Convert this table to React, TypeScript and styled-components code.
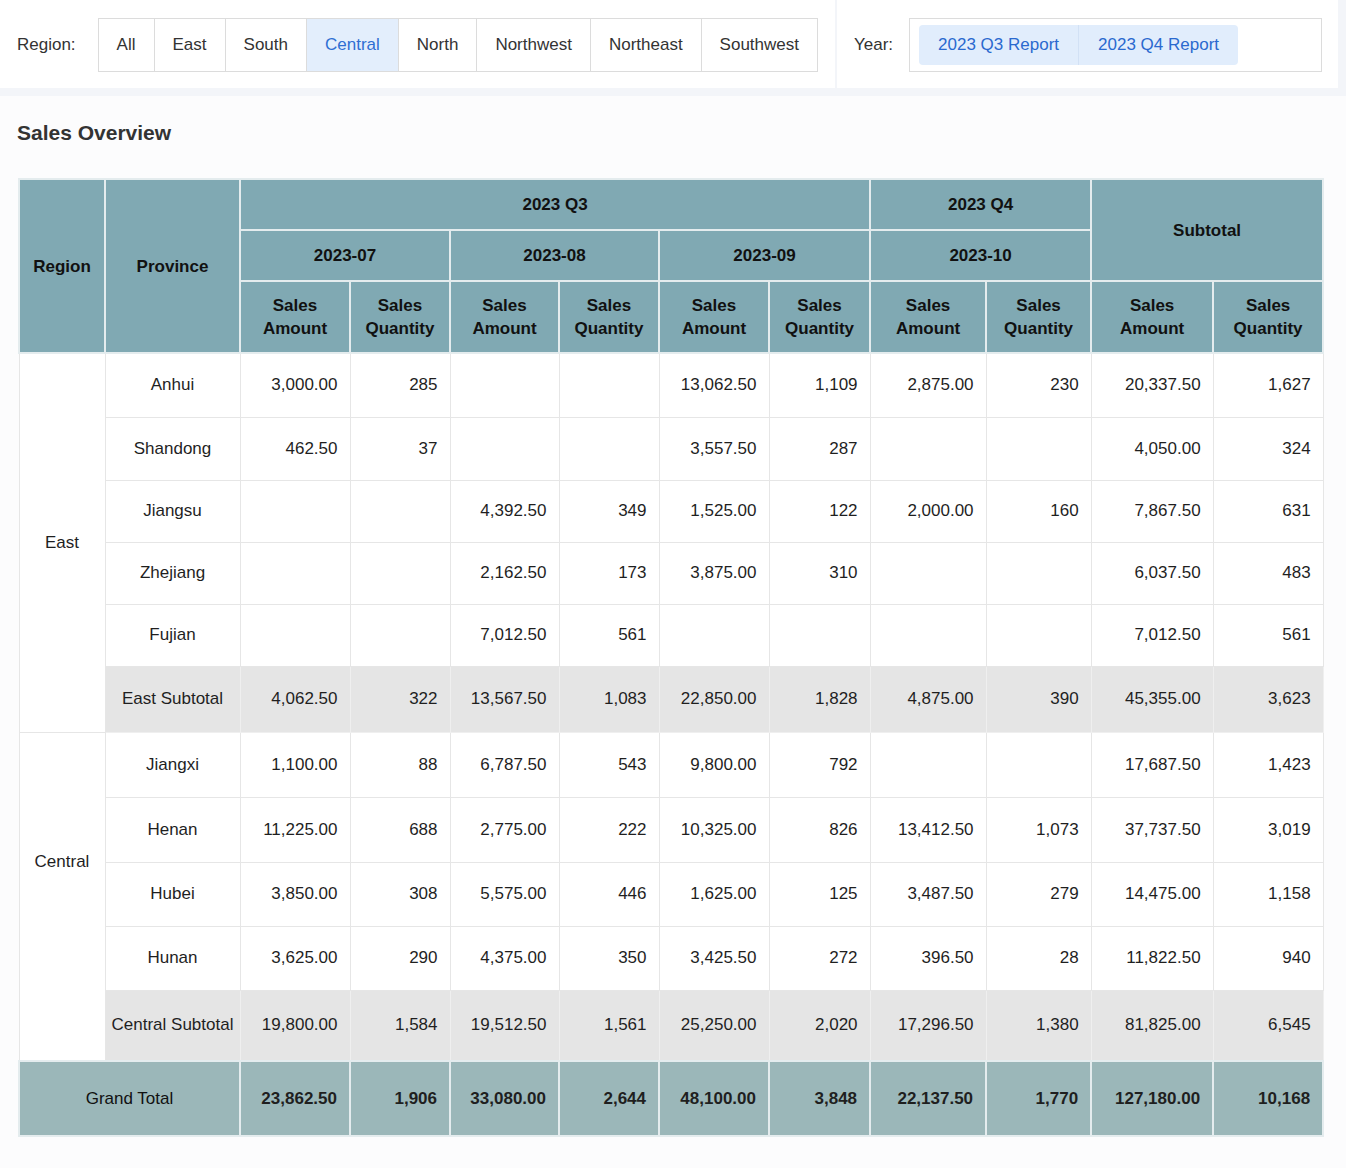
import React, { useState } from "react";
import styled, { createGlobalStyle, css } from "styled-components";

const GlobalStyle = createGlobalStyle`
  html, body {
    margin: 0;
    padding: 0;
    background: #fcfcfd;
    font-family: "Liberation Sans", Helvetica, Arial, sans-serif;
    color: #222;
  }
`;

const Page = styled.div`
  min-height: 1168px;
  background: #fcfcfd;
`;

const TopBar = styled.div`
  display: flex;
  gap: 2px;
  padding: 0 8px 8px 0;
  background: #f3f5f9;
`;

const FilterCard = styled.div<{ $grow?: boolean; $gap: number }>`
  display: flex;
  align-items: center;
  gap: ${({ $gap }) => $gap}px;
  height: 88px;
  box-sizing: border-box;
  padding: 1px 16px 0 17px;
  background: #fff;
  flex: ${({ $grow }) => ($grow ? "1" : "0 0 auto")};
`;

const FilterLabel = styled.span`
  font-size: 17px;
  color: #333;
`;

const SegmentGroup = styled.div`
  display: flex;
  height: 54px;
  box-sizing: border-box;
  border: 1px solid #dcdcdc;
`;

const Segment = styled.button<{ $active?: boolean }>`
  font-family: inherit;
  font-size: 17px;
  padding: 0 18px;
  border: none;
  border-right: 1px solid #dcdcdc;
  background: ${({ $active }) => ($active ? "#e3eefc" : "#fff")};
  color: ${({ $active }) => ($active ? "#2f6fd3" : "#333")};
  cursor: pointer;
  &:last-child {
    border-right: none;
  }
`;

const ReportBox = styled.div`
  flex: 1;
  display: flex;
  align-items: center;
  height: 54px;
  box-sizing: border-box;
  padding: 0 9px;
  border: 1px solid #dcdcdc;
`;

const ReportButton = styled.button`
  font-family: inherit;
  font-size: 17px;
  height: 40px;
  padding: 0 19px;
  border: none;
  background: #e1edfc;
  color: #2a69cf;
  cursor: pointer;
  &:first-child {
    border-radius: 4px 0 0 4px;
    border-right: 1px solid #d2e1f5;
  }
  &:last-child {
    border-radius: 0 4px 4px 0;
  }
`;

const Main = styled.div`
  padding: 25px 24px 30px 18px;
`;

const Title = styled.h2`
  margin: 0 0 33px -1px;
  font-size: 21px;
  font-weight: bold;
  color: #333;
`;

const Table = styled.table`
  width: 1304px;
  table-layout: fixed;
  border-collapse: collapse;
  font-size: 17px;
  color: #1f1f1f;
`;

const HeadCell = styled.th`
  background: #80a9b3;
  color: #111;
  font-weight: bold;
  border: 2px solid #e4ecee;
  text-align: center;
  padding: 0 8px;
  line-height: 23px;
`;

const Row = styled.tr<{ $h: number }>`
  height: ${({ $h }) => $h}px;
`;

type Kind = "data" | "sub" | "total";

const Cell = styled.td<{ $kind?: Kind; $align?: "center" | "right" }>`
  border: 1px solid #e6e6e6;
  padding: ${({ $align }) => ($align === "center" ? "0 4px" : "0 12px")};
  text-align: ${({ $align }) => $align || "right"};
  background: #fff;
  white-space: nowrap;
  ${({ $kind }) =>
    $kind === "sub" &&
    css`
      background: #e5e5e5;
      border-color: #efefef;
    `}
  ${({ $kind }) =>
    $kind === "total" &&
    css`
      background: #9bb7b9;
      border: 2px solid #e4ecee;
      font-weight: bold;
    `}
`;

const RegionCell = styled.td<{ $lift: number }>`
  border: 1px solid #e6e6e6;
  background: #fff;
  text-align: center;
  vertical-align: middle;
  padding: 0 8px ${({ $lift }) => $lift}px;
`;

const GrandLabel = styled.span`
  font-weight: normal;
  color: #111;
`;

type Pair = [string, string];
type Line = { name: string; values: Pair[]; h: number; sub?: boolean };
type Group = { region: string; lift: number; lines: Line[] };

const E: Pair = ["", ""];

const groups: Group[] = [
  {
    region: "East",
    lift: 0,
    lines: [
      { name: "Anhui", h: 64, values: [["3,000.00", "285"], E, ["13,062.50", "1,109"], ["2,875.00", "230"], ["20,337.50", "1,627"]] },
      { name: "Shandong", h: 63, values: [["462.50", "37"], E, ["3,557.50", "287"], E, ["4,050.00", "324"]] },
      { name: "Jiangsu", h: 62, values: [E, ["4,392.50", "349"], ["1,525.00", "122"], ["2,000.00", "160"], ["7,867.50", "631"]] },
      { name: "Zhejiang", h: 62, values: [E, ["2,162.50", "173"], ["3,875.00", "310"], E, ["6,037.50", "483"]] },
      { name: "Fujian", h: 62, values: [E, ["7,012.50", "561"], E, E, ["7,012.50", "561"]] },
      { name: "East Subtotal", h: 66, sub: true, values: [["4,062.50", "322"], ["13,567.50", "1,083"], ["22,850.00", "1,828"], ["4,875.00", "390"], ["45,355.00", "3,623"]] },
    ],
  },
  {
    region: "Central",
    lift: 68,
    lines: [
      { name: "Jiangxi", h: 65, values: [["1,100.00", "88"], ["6,787.50", "543"], ["9,800.00", "792"], E, ["17,687.50", "1,423"]] },
      { name: "Henan", h: 65, values: [["11,225.00", "688"], ["2,775.00", "222"], ["10,325.00", "826"], ["13,412.50", "1,073"], ["37,737.50", "3,019"]] },
      { name: "Hubei", h: 64, values: [["3,850.00", "308"], ["5,575.00", "446"], ["1,625.00", "125"], ["3,487.50", "279"], ["14,475.00", "1,158"]] },
      { name: "Hunan", h: 64, values: [["3,625.00", "290"], ["4,375.00", "350"], ["3,425.50", "272"], ["396.50", "28"], ["11,822.50", "940"]] },
      { name: "Central Subtotal", h: 71, sub: true, values: [["19,800.00", "1,584"], ["19,512.50", "1,561"], ["25,250.00", "2,020"], ["17,296.50", "1,380"], ["81,825.00", "6,545"]] },
    ],
  },
];

const grandTotal: Pair[] = [
  ["23,862.50", "1,906"],
  ["33,080.00", "2,644"],
  ["48,100.00", "3,848"],
  ["22,137.50", "1,770"],
  ["127,180.00", "10,168"],
];

const colWidths = [86, 135, 110, 100, 109, 100, 110, 101, 116, 105, 122, 110];
const regions = ["All", "East", "South", "Central", "North", "Northwest", "Northeast", "Southwest"];

export default function App() {
  const [region, setRegion] = useState("Central");

  return (
    <Page>
      <GlobalStyle />
      <TopBar>
        <FilterCard $gap={22} style={{ width: 835 }}>
          <FilterLabel>Region:</FilterLabel>
          <SegmentGroup>
            {regions.map((r) => (
              <Segment key={r} $active={r === region} onClick={() => setRegion(r)}>
                {r}
              </Segment>
            ))}
          </SegmentGroup>
        </FilterCard>
        <FilterCard $gap={16} $grow>
          <FilterLabel>Year:</FilterLabel>
          <ReportBox>
            <ReportButton>2023 Q3 Report</ReportButton>
            <ReportButton>2023 Q4 Report</ReportButton>
          </ReportBox>
        </FilterCard>
      </TopBar>

      <Main>
        <Title>Sales Overview</Title>
        <Table>
          <colgroup>
            {colWidths.map((w, i) => (
              <col key={i} style={{ width: w }} />
            ))}
          </colgroup>
          <thead>
            <Row $h={51}>
              <HeadCell rowSpan={3}>Region</HeadCell>
              <HeadCell rowSpan={3}>Province</HeadCell>
              <HeadCell colSpan={6}>2023 Q3</HeadCell>
              <HeadCell colSpan={2}>2023 Q4</HeadCell>
              <HeadCell colSpan={2} rowSpan={2}>Subtotal</HeadCell>
            </Row>
            <Row $h={51}>
              <HeadCell colSpan={2}>2023-07</HeadCell>
              <HeadCell colSpan={2}>2023-08</HeadCell>
              <HeadCell colSpan={2}>2023-09</HeadCell>
              <HeadCell colSpan={2}>2023-10</HeadCell>
            </Row>
            <Row $h={72}>
              {Array.from({ length: 5 }).flatMap((_, i) => [
                <HeadCell key={`a${i}`}>Sales<br />Amount</HeadCell>,
                <HeadCell key={`q${i}`}>Sales<br />Quantity</HeadCell>,
              ])}
            </Row>
          </thead>
          <tbody>
            {groups.map((g) =>
              g.lines.map((line, li) => {
                const kind: Kind = line.sub ? "sub" : "data";
                return (
                  <Row key={line.name} $h={line.h}>
                    {li === 0 && (
                      <RegionCell rowSpan={g.lines.length} $lift={g.lift}>
                        {g.region}
                      </RegionCell>
                    )}
                    <Cell $kind={kind} $align="center">{line.name}</Cell>
                    {line.values.flatMap(([amount, qty], i) => [
                      <Cell key={`a${i}`} $kind={kind}>{amount}</Cell>,
                      <Cell key={`q${i}`} $kind={kind}>{qty}</Cell>,
                    ])}
                  </Row>
                );
              })
            )}
            <Row $h={75}>
              <Cell $kind="total" $align="center" colSpan={2}>
                <GrandLabel>Grand Total</GrandLabel>
              </Cell>
              {grandTotal.flatMap(([amount, qty], i) => [
                <Cell key={`a${i}`} $kind="total">{amount}</Cell>,
                <Cell key={`q${i}`} $kind="total">{qty}</Cell>,
              ])}
            </Row>
          </tbody>
        </Table>
      </Main>
    </Page>
  );
}
